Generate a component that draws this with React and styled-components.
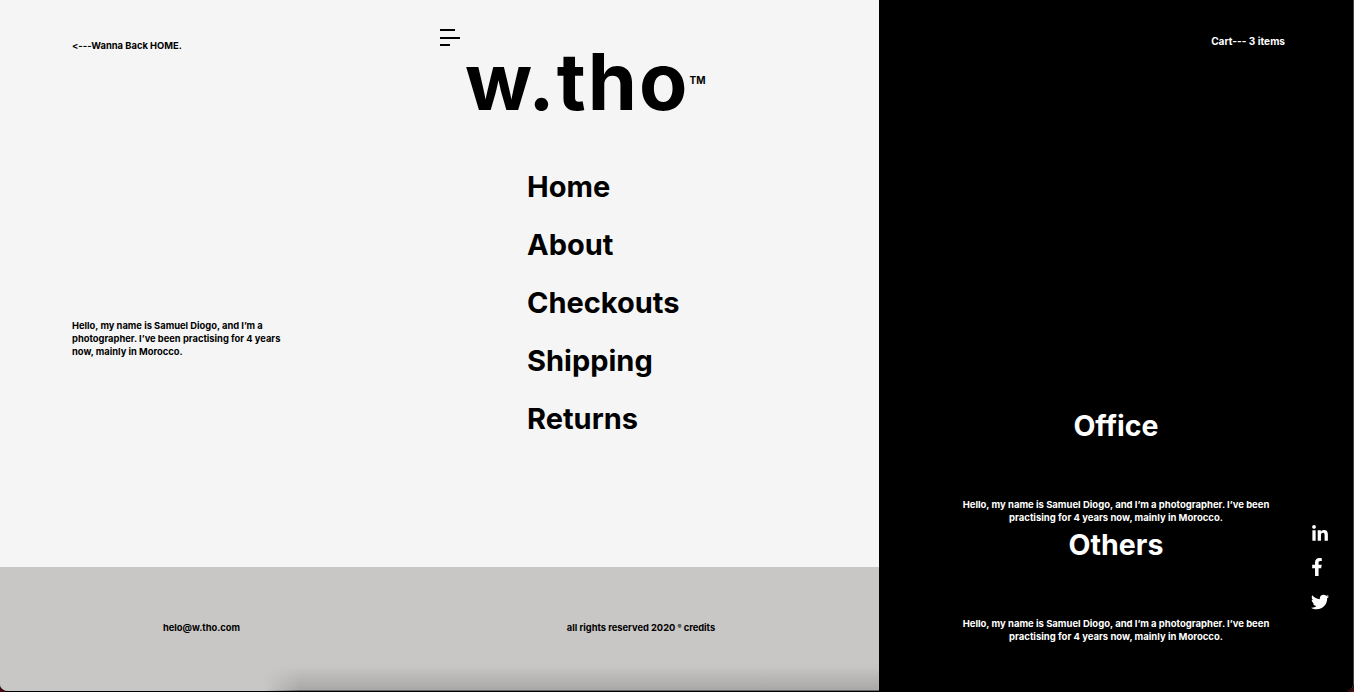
import React from "react";
import styled, { createGlobalStyle } from "styled-components";
import { FaLinkedinIn, FaFacebookF, FaTwitter } from "react-icons/fa";

const Global = createGlobalStyle`
  html, body { margin: 0; padding: 0; background: #4a0810; }
  #root { width: 1354px; height: 692px; overflow: hidden; }
  * { box-sizing: border-box; }
`;
const font = `"Inter", "Liberation Sans", sans-serif`;

const Page = styled.div`
  width: 1354px; height: 692px; display: grid; grid-template-columns: 879px 475px;
  font-family: ${font}; font-feature-settings: "calt" 0, "liga" 0; font-variant-ligatures: none;
  border-radius: 0 0 8px 8px; overflow: hidden; background: #000; border-bottom: 1px solid #000;
`;
const Left = styled.div`display: grid; grid-template-rows: 567px 124px;`;
const Main = styled.main`
  background: #f5f5f5; display: grid; grid-template-columns: 367px 512px;
`;
const Intro = styled.div`
  padding: 40px 0 0 72px; display: flex; flex-direction: column;
`;
const Back = styled.a`
  font-size: 9.4px; font-weight: 700; line-height: 11px; color: #000;
`;
const Bio = styled.p`
  margin: 268px 0 0; width: 215px; font-size: 9.35px; font-weight: 700; line-height: 13px; color: #000;
`;
const Centre = styled.div`
  padding-top: 29px; display: flex; flex-direction: column;
`;
const Burger = styled.div`
  margin-left: 73px; width: 20px; display: flex; flex-direction: column; gap: 5.5px; align-items: flex-start;
`;
const Bar = styled.span`
  display: block; height: 2px; background: #000; width: ${(p) => p.$w}px;
`;
const Logo = styled.h1`
  margin: -6px 0 0 98px; display: flex; align-items: flex-start; font-size: 79px; font-weight: 700;
  line-height: 82px; letter-spacing: 2px; color: #000; height: 101px;
`;
const Tm = styled.sup`
  font-size: 10px; font-weight: 700; line-height: 11px; letter-spacing: 0; margin: 35px 0 0 0;
`;
const Nav = styled.nav`
  margin: 27px 0 0 160px; display: flex; flex-direction: column; gap: 20px;
`;
const NavItem = styled.a`
  font-size: 29px; font-weight: 700; line-height: 38px; color: #000;
`;
const Footer = styled.footer`
  background: linear-gradient(#c8c7c5 0 calc(100% - 30px), #c6c5c3 calc(100% - 24px), #a8a7a6 100%);
  box-shadow: inset 0 -1px 0 #666;
  display: grid; grid-template-columns: 403px 476px; position: relative;
  font-size: 9.3px; font-weight: 700; color: #000; text-align: center; padding-top: 55px;
`;
const FooterText = styled.div`line-height: 12px;`;
const Reg = styled.sup`font-size: 6px; line-height: 0; vertical-align: 2px;`;
const FooterFade = styled.div`
  position: absolute; left: 0; bottom: 0; width: 300px; height: 40px;
  background: linear-gradient(90deg, #c8c7c5 88%, rgba(200,199,197,0));
`;
const Right = styled.aside`
  background: #000; color: #fff; position: relative; display: flex; flex-direction: column;
  border-right: 1px solid #444; border-bottom: 1px solid #555; border-bottom-right-radius: 8px;
  height: 692px;
`;
const Cart = styled.div`
  margin: 36px 68px 0 0; text-align: right; font-size: 10.1px; font-weight: 700; line-height: 11px;
`;
const Block = styled.section`
  width: 320px; margin: ${(p) => p.$top}px 0 0 77px; text-align: center;
`;
const Title = styled.h2`
  margin: 0; font-size: 28.5px; font-weight: 700; line-height: 38px;
`;
const Body = styled.p`
  margin: 53px 0 0; font-size: 9.5px; font-weight: 700; line-height: 13px;
`;
const Social = styled.div`
  position: absolute; left: 432px; top: 525px; display: flex; flex-direction: column; gap: 16px; font-size: 18px; line-height: 0;
`;
const Facebook = styled(FaFacebookF)`
  margin: -1px 0 1px -3px;
`;

const bioText = "Hello, my name is Samuel Diogo, and I’m a photographer. I’ve been practising for 4 years now, mainly in Morocco.";
const links = ["Home", "About", "Checkouts", "Shipping", "Returns"];

export default function App() {
  return (
    <Page>
      <Global />
      <Left>
        <Main>
          <Intro>
            <Back>&lt;---Wanna Back HOME.</Back>
            <Bio>{bioText}</Bio>
          </Intro>
          <Centre>
            <Burger>
              <Bar $w={15} /><Bar $w={20} /><Bar $w={10} />
            </Burger>
            <Logo>w.tho<Tm>TM</Tm></Logo>
            <Nav>
              {links.map((l) => <NavItem key={l}>{l}</NavItem>)}
            </Nav>
          </Centre>
        </Main>
        <Footer>
          <FooterText>helo@w.tho.com</FooterText>
          <FooterText>all rights reserved 2020 <Reg>®</Reg> credits</FooterText>
          <FooterFade />
        </Footer>
      </Left>
      <Right>
        <Cart>Cart--- 3 items</Cart>
        <Block $top={360}>
          <Title>Office</Title>
          <Body>{bioText}</Body>
        </Block>
        <Block $top={2}>
          <Title>Others</Title>
          <Body>{bioText}</Body>
        </Block>
        <Social>
          <FaLinkedinIn /><Facebook /><FaTwitter />
        </Social>
      </Right>
    </Page>
  );
}
